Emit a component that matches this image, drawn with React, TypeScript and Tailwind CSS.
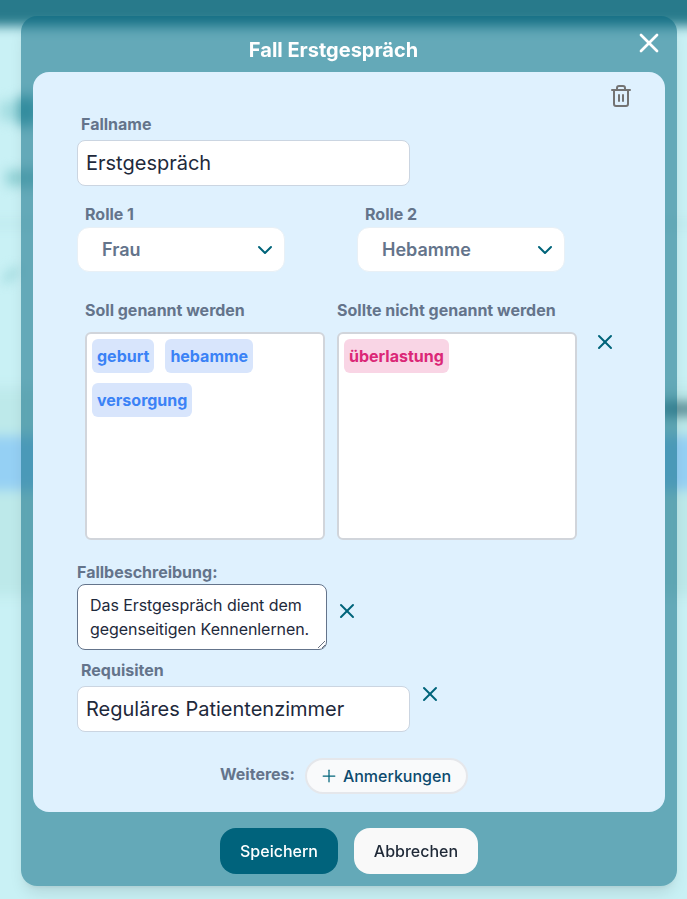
import { X, ChevronDown, Plus, Trash2 } from "lucide-react";

const LABEL = "text-base font-bold text-[#64748b]";

function Tag({ text, tone }: { text: string; tone: "blue" | "pink" }) {
  return (
    <span
      className={`flex h-[34px] items-center rounded-md px-[5px] text-base font-bold ${
        tone === "blue" ? "bg-[#d8e5fc] text-[#3b82f6]" : "bg-[#f9d5e5] text-[#db2777]"
      }`}
    >
      {text}
    </span>
  );
}

function RoleSelect({ label, value }: { label: string; value: string }) {
  return (
    <div className="w-[208px]">
      <p className={`${LABEL} ml-2 mb-[3px] leading-5`}>{label}</p>
      <div className="flex h-[45px] items-center justify-between rounded-xl border border-[#e8f0f6] bg-white pl-6 pr-[7px] text-lg font-semibold text-[#64748b]">
        {value}
        <ChevronDown size={24} strokeWidth={2} className="text-[#00647a]" />
      </div>
    </div>
  );
}

function TagBox({ children }: { children?: React.ReactNode }) {
  return (
    <div className="flex h-[208px] w-[240px] flex-wrap content-start gap-x-[11px] gap-y-[10px] rounded-md border-2 border-[#d1d5db] bg-white p-[5px]">
      {children}
    </div>
  );
}

function TextField({ value }: { value: string }) {
  return (
    <div className="flex h-[46px] w-[333px] items-center rounded-lg border border-[#cbd5e1] bg-white px-2 text-xl text-[#1e293b]">
      {value}
    </div>
  );
}

export default function App() {
  return (
    <div className="relative h-[899px] overflow-hidden bg-[#c9f1f5] font-['Inter',sans-serif]">
      {/* blurred page behind the dialog */}
      <div className="absolute inset-0 blur-[6px]">
        <div className="absolute -left-4 -right-4 -top-4 h-[42px] bg-[#287a8b]" />
        <div className="absolute left-0 top-[100px] h-[22px] w-[12px] rounded-full bg-[#9fdade]" />
        <div className="absolute left-[16px] top-[96px] h-[30px] w-[22px] rounded-lg bg-[#5fb3bd]" />
        <div className="absolute left-[6px] top-[170px] h-[16px] w-[60px] rounded bg-[#8fd0d4]" />
        <div className="absolute -left-4 -right-4 top-[223px] h-[2px] bg-[#a8dadf]" />
        <div className="absolute left-[2px] top-[272px] h-[6px] w-[18px] -rotate-45 bg-[#8fd0d4]" />
        <div className="absolute -left-4 -right-4 top-[388px] h-[48px] bg-[#bde9ea]" />
        <div className="absolute -left-4 -right-4 top-[436px] h-[54px] bg-[#95d0f4]" />
        <div className="absolute -left-4 -right-4 top-[490px] h-[106px] bg-[#bde9ea]" />
        <div className="absolute -right-4 top-[402px] h-[14px] w-[46px] bg-[#5c8f98]" />
      </div>

      <div className="absolute left-[21px] top-4 flex h-[870px] w-[656px] flex-col rounded-2xl bg-[#00637c]/50 px-3 shadow-lg backdrop-blur-[3px]">
        <div className="relative flex h-[56px] shrink-0 items-center justify-center pr-[31px] pt-[12px]">
          <h1 className="text-xl font-bold text-white">Fall Erstgespräch</h1>
          <X size={32} strokeWidth={2} className="absolute right-0 top-[11px] text-white" />
        </div>

        <div className="relative h-[740px] shrink-0 rounded-2xl bg-[#dff1fe] pl-[44px] pt-[42px]">
          <Trash2 size={24} strokeWidth={2} className="absolute right-[32px] top-3 text-[#737373]" />

          <p className={`${LABEL} ml-1 mb-[6px] leading-5`}>Fallname</p>
          <TextField value="Erstgespräch" />

          <div className="mt-[18px] flex gap-[72px]">
            <RoleSelect label="Rolle 1" value="Frau" />
            <RoleSelect label="Rolle 2" value="Hebamme" />
          </div>

          <div className="ml-2 mt-[28px] flex gap-3">
            <div>
              <p className={`${LABEL} mb-3 leading-5`}>Soll genannt werden</p>
              <TagBox>
                <Tag text="geburt" tone="blue" />
                <Tag text="hebamme" tone="blue" />
                <Tag text="versorgung" tone="blue" />
              </TagBox>
            </div>
            <div>
              <p className={`${LABEL} mb-3 leading-5`}>Sollte nicht genannt werden</p>
              <TagBox>
                <Tag text="überlastung" tone="pink" />
              </TagBox>
            </div>
            <X size={24} strokeWidth={2} className="ml-1 mt-[30px] text-[#00647a]" />
          </div>

          <p className={`${LABEL} mt-[22px] leading-5`}>Fallbeschreibung:</p>
          <div className="flex items-start">
            <div className="relative mt-[2px] h-[66px] w-[250px] rounded-lg border border-[#64748b] bg-white pl-3 pt-[8px] text-base leading-6 tracking-[-0.07px] text-[#1e293b]">
              Das Erstgespräch dient dem gegenseitigen Kennenlernen.
              <svg viewBox="0 0 8 8" className="absolute bottom-px right-px h-2 w-2 text-[#6b7280]">
                <path d="M8 1 1 8M8 5 5 8" stroke="currentColor" strokeWidth="1" fill="none" />
              </svg>
            </div>
            <X size={24} strokeWidth={2} className="ml-2 mt-[17px] text-[#00647a]" />
          </div>

          <p className={`${LABEL} ml-1 mt-[10px] mb-[6px] leading-5`}>Requisiten</p>
          <div className="flex items-start">
            <TextField value="Reguläres Patientenzimmer" />
            <X size={24} strokeWidth={2} className="ml-2 mt-[-4px] text-[#00647a]" />
          </div>

          <div className="mt-[26px] flex items-center pl-[143px]">
            <span className={`${LABEL} mr-[10px] mt-[-4px]`}>Weiteres:</span>
            <div className="flex h-[36px] items-center gap-1 rounded-full border-2 border-[#e5e7eb] bg-[#f9fafb] pl-3 pr-[15px] text-base font-medium text-[#0c4a6e]">
              <Plus size={20} strokeWidth={1.5} className="text-[#00647a]" />
              Anmerkungen
            </div>
          </div>
        </div>

        <div className="mt-4 flex justify-center gap-4">
          <button className="h-[46px] w-[118px] rounded-2xl bg-[#00637c] text-base font-medium text-white">Speichern</button>
          <button className="h-[46px] w-[124px] rounded-2xl bg-[#f9f9f9] text-base font-medium text-[#1f2937]">Abbrechen</button>
        </div>
      </div>
    </div>
  );
}
